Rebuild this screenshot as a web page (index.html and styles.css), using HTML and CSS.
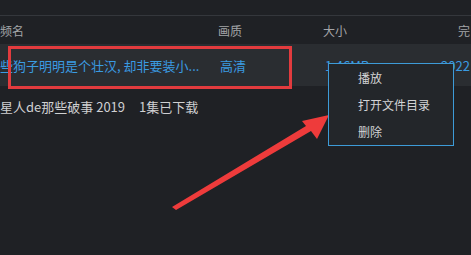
FILE: index.html
```html
<!DOCTYPE html>
<html lang="zh-CN">
<head>
<meta charset="utf-8">
<link rel="stylesheet" href="styles.css">
</head>
<body>
<div class="screen">
  <div class="topbar"></div>
  <div class="row head">
    <div class="c-name">频名</div>
    <div class="c-q">画质</div>
    <div class="c-size">大小</div>
    <div class="c-time">完</div>
  </div>
  <div class="row item selected">
    <div class="c-name">些狗子明明是个壮汉, 却非要装小...</div>
    <div class="c-q">高清</div>
    <div class="c-size">1.46MB</div>
    <div class="c-time">2022</div>
  </div>
  <div class="row item plain">
    <div class="c-name">星人de那些破事 2019<span class="ep">1集已下载</span></div>
  </div>

  <div class="redbox"></div>

  <svg class="arrow" width="471" height="255" viewBox="0 0 471 255">
    <path d="M172 207 L306 126 L302 121 L329 115 L317 139 L311 131 L176 210 Z" fill="#ee3b3b"/>
  </svg>

  <ul class="menu">
    <li>播放</li>
    <li>打开文件目录</li>
    <li>删除</li>
  </ul>
</div>
</body>
</html>
```
FILE: styles.css
```css
html, body {
  margin: 0;
  padding: 0;
  background: #1f2125;
}
.screen {
  position: relative;
  width: 471px;
  height: 255px;
  overflow: hidden;
  font-family: "Noto Sans CJK SC", "Noto Sans", sans-serif;
  background: #1f2125;
}
.topbar {
  height: 15px;
  border-bottom: 1px solid #34373c;
}
.row {
  display: flex;
  align-items: center;
  white-space: nowrap;
}
.row > div { flex-shrink: 0; }
.head {
  height: 28px;
  font-size: 12px;
  color: #a3a5a8;
}
.head .c-name { width: 218px; }
.head .c-q { width: 105px; }
.head .c-size { width: 135px; }
.item {
  font-size: 13px;
}
.selected {
  height: 42px;
  background: #2a2d31;
  color: #3a9be2;
}
.selected .c-name { width: 220px; }
.selected .c-q { width: 105px; }
.selected .c-size { width: 116px; }
.plain {
  height: 40px;
  color: #cfd0d2;
}
.ep { margin-left: 14px; }
.redbox {
  position: absolute;
  left: 8px;
  top: 46px;
  width: 278px;
  height: 37px;
  border: 3px solid #e23b3e;
}
.arrow {
  position: absolute;
  left: 0;
  top: 0;
}
.menu {
  position: absolute;
  left: 328px;
  top: 63px;
  width: 124px;
  height: 81px;
  margin: 0;
  padding: 0;
  list-style: none;
  background: #23262a;
  border: 1px solid #3d9bd8;
  font-size: 12px;
  color: #d3d4d6;
  display: flex;
  flex-direction: column;
}
.menu li {
  height: 27px;
  line-height: 27px;
  padding-left: 29px;
}
```
